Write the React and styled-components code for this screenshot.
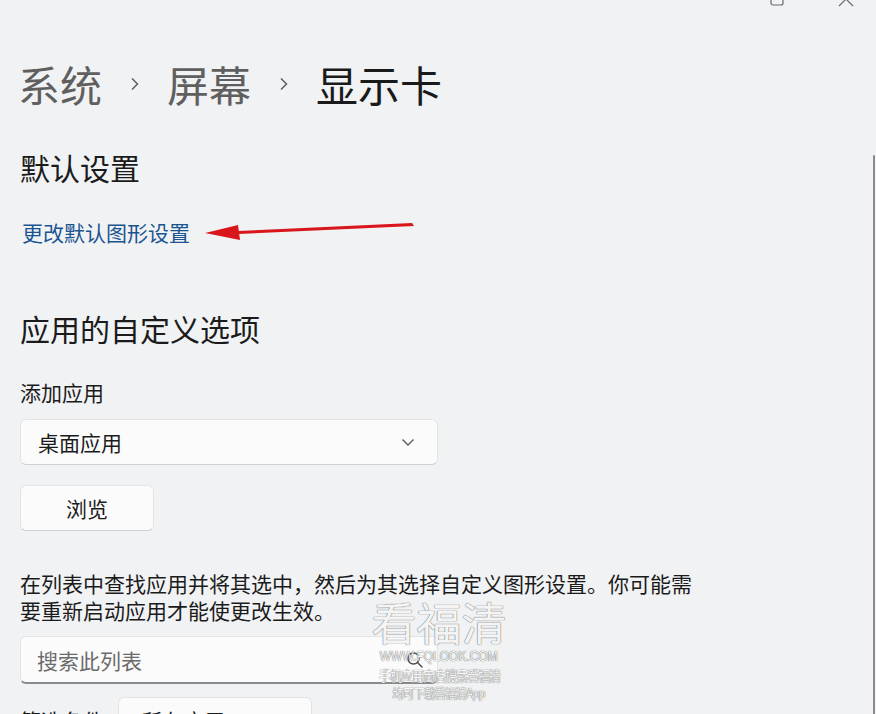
import React from "react";
import styled, { createGlobalStyle } from "styled-components";

const GlobalStyle = createGlobalStyle`
  html, body {
    margin: 0;
    padding: 0;
    background: #f1f2f4;
  }
  body {
    font-family: "Noto Sans CJK SC", "Noto Sans", "Liberation Sans", sans-serif;
    color: #1b1b1b;
  }
`;

const Page = styled.div`
  position: relative;
  width: 876px;
  height: 714px;
  overflow: hidden;
  background: #f1f2f4;
`;

const TitleBar = styled.div`
  display: flex;
  justify-content: flex-end;
  align-items: flex-end;
  height: 7px;
  overflow: hidden;
  padding-right: 22px;
  gap: 54px;
  svg {
    display: block;
  }
`;

const Content = styled.div`
  padding-left: 20px;
  display: flex;
  flex-direction: column;
  align-items: flex-start;
`;

const Breadcrumb = styled.div`
  display: flex;
  align-items: center;
  margin-top: 56px;
  height: 42px;
  font-size: 42px;
  line-height: 42px;
  margin-left: -2px;
`;

const Crumb = styled.span`
  color: ${(p) => (p.current ? "#1a1a1a" : "#5f5f5f")};
`;

const Sep = styled.span`
  display: flex;
  margin: 0 28px;
  svg {
    display: block;
  }
`;

const Heading = styled.h2`
  margin: ${(p) => p.top}px 0 0;
  font-size: 30px;
  line-height: 30px;
  font-weight: 400;
  color: #1b1b1b;
`;

const LinkRow = styled.div`
  position: relative;
  margin-top: 40px;
  width: 420px;
`;

const Link = styled.a`
  display: inline-block;
  margin-left: 2px;
  font-size: 21px;
  line-height: 21px;
  color: #1a5591;
  text-decoration: none;
`;

const Arrow = styled.svg`
  position: absolute;
  left: 0;
  top: -20px;
`;

const Label = styled.div`
  margin-top: ${(p) => p.top}px;
  font-size: 21px;
  line-height: 21px;
  color: #1b1b1b;
`;

const Control = styled.div`
  box-sizing: border-box;
  display: flex;
  align-items: center;
  justify-content: space-between;
  width: ${(p) => p.w}px;
  height: ${(p) => p.h || 46}px;
  margin-top: ${(p) => p.top}px;
  padding: 0 22px 0 17px;
  background: #fbfbfc;
  border: 1px solid #e3e4e6;
  border-bottom-color: #cfd0d2;
  border-radius: 6px;
  font-size: 21px;
  color: #1b1b1b;
`;

const Button = styled.div`
  box-sizing: border-box;
  display: flex;
  align-items: center;
  justify-content: center;
  width: 134px;
  height: 46px;
  margin-top: 20px;
  background: #fbfbfc;
  border: 1px solid #e3e4e6;
  border-bottom-color: #cfd0d2;
  border-radius: 6px;
  font-size: 21px;
  color: #1b1b1b;
`;

const Paragraph = styled.p`
  margin: 39px 0 0;
  width: 690px;
  font-size: 21px;
  line-height: 27px;
  color: #1b1b1b;
`;

const Search = styled(Control)`
  height: 48px;
  margin-top: 12px;
  padding: 0 13px 0 16px;
  border-bottom: 2px solid #8a8b8d;
  color: #6b6b6b;
`;

const FilterRow = styled.div`
  display: flex;
  align-items: center;
  gap: 14px;
  margin-top: 13px;
`;

const FilterBox = styled(Control)`
  margin-top: 0;
  padding-left: 22px;
`;

const Watermark = styled.div`
  position: absolute;
  left: 366px;
  top: 596px;
  width: 146px;
  display: flex;
  flex-direction: column;
  align-items: center;
  color: rgba(255, 255, 255, 0.95);
  text-shadow: 0 0 1px rgba(80, 80, 80, 0.9), 0 0 1px rgba(80, 80, 80, 0.6);
  pointer-events: none;
`;

const MarkBig = styled.div`
  font-size: 45px;
  line-height: 52px;
`;

const MarkSmall = styled.div`
  font-size: ${(p) => p.size || 12}px;
  line-height: ${(p) => p.lh || 15}px;
  font-family: ${(p) => (p.latin ? '"Liberation Sans", sans-serif' : "inherit")};
  letter-spacing: ${(p) => p.ls || 0}px;
  transform: scaleX(${(p) => p.sx || 1});
  white-space: nowrap;
`;

const ScrollBar = styled.div`
  position: absolute;
  right: 1px;
  top: 155px;
  bottom: 0;
  width: 2px;
  border-radius: 1px 1px 0 0;
  background: #8b8b8b;
`;

const Chevron = () => (
  <svg width="9" height="14" viewBox="0 0 9 14">
    <path d="M2 1.5 L7.5 7 L2 12.5" fill="none" stroke="#5f5f5f" strokeWidth="1.5" />
  </svg>
);

const DownChevron = () => (
  <svg width="14" height="9" viewBox="0 0 14 9">
    <path d="M1.5 1.5 L7 7 L12.5 1.5" fill="none" stroke="#5a5a5a" strokeWidth="1.4" />
  </svg>
);

const SearchIcon = () => (
  <svg width="18" height="18" viewBox="0 0 18 18">
    <circle cx="7.5" cy="7.5" r="5.5" fill="none" stroke="#4a4a4a" strokeWidth="1.4" />
    <path d="M11.5 11.5 L16 16" stroke="#4a4a4a" strokeWidth="1.4" strokeLinecap="round" />
  </svg>
);

export default function App() {
  return (
    <Page>
      <GlobalStyle />
      <TitleBar>
        <svg width="14" height="14" viewBox="0 0 14 14">
          <rect x="1" y="1" width="12" height="11" rx="2" fill="none" stroke="#6b6b6b" strokeWidth="1.2" />
        </svg>
        <svg width="16" height="16" viewBox="0 0 16 16">
          <path d="M1 1 L15 15 M15 1 L1 15" stroke="#6b6b6b" strokeWidth="1.2" />
        </svg>
      </TitleBar>

      <Content>
        <Breadcrumb>
          <Crumb>系统</Crumb>
          <Sep><Chevron /></Sep>
          <Crumb>屏幕</Crumb>
          <Sep><Chevron /></Sep>
          <Crumb current>显示卡</Crumb>
        </Breadcrumb>

        <Heading top={47}>默认设置</Heading>

        <LinkRow>
          <Link>更改默认图形设置</Link>
          <Arrow width="420" height="40" viewBox="0 0 420 40">
            <path d="M392 21 L394 24 L218 32 L217 29 Z" fill="#d8161b" />
            <path d="M185 31 L218 23 L220 38 Z" fill="#d8161b" />
          </Arrow>
        </LinkRow>

        <Heading top={67}>应用的自定义选项</Heading>

        <Label top={39}>添加应用</Label>
        <Control w={418} top={16}>
          <span>桌面应用</span>
          <DownChevron />
        </Control>
        <Button>浏览</Button>

        <Paragraph>
          在列表中查找应用并将其选中，然后为其选择自定义图形设置。你可能需要重新启动应用才能使更改生效。
        </Paragraph>

        <Search w={418}>
          <span>搜索此列表</span>
          <SearchIcon />
        </Search>

        <FilterRow>
          <Label top={0}>筛选条件</Label>
          <FilterBox w={194}>
            <span>所有应用</span>
          </FilterBox>
        </FilterRow>
      </Content>

      <Watermark>
        <MarkBig>看福清</MarkBig>
        <MarkSmall latin size={15} lh={16} sx={0.8}>WWW.FQLOOK.COM</MarkSmall>
        <MarkSmall size={14} lh={22} sx={0.86} ls={-1.2}>手机应用商店搜索看福清</MarkSmall>
        <MarkSmall size={13} lh={14} sx={0.88} ls={-1}>均可下载看福清App</MarkSmall>
      </Watermark>

      <ScrollBar />
    </Page>
  );
}
